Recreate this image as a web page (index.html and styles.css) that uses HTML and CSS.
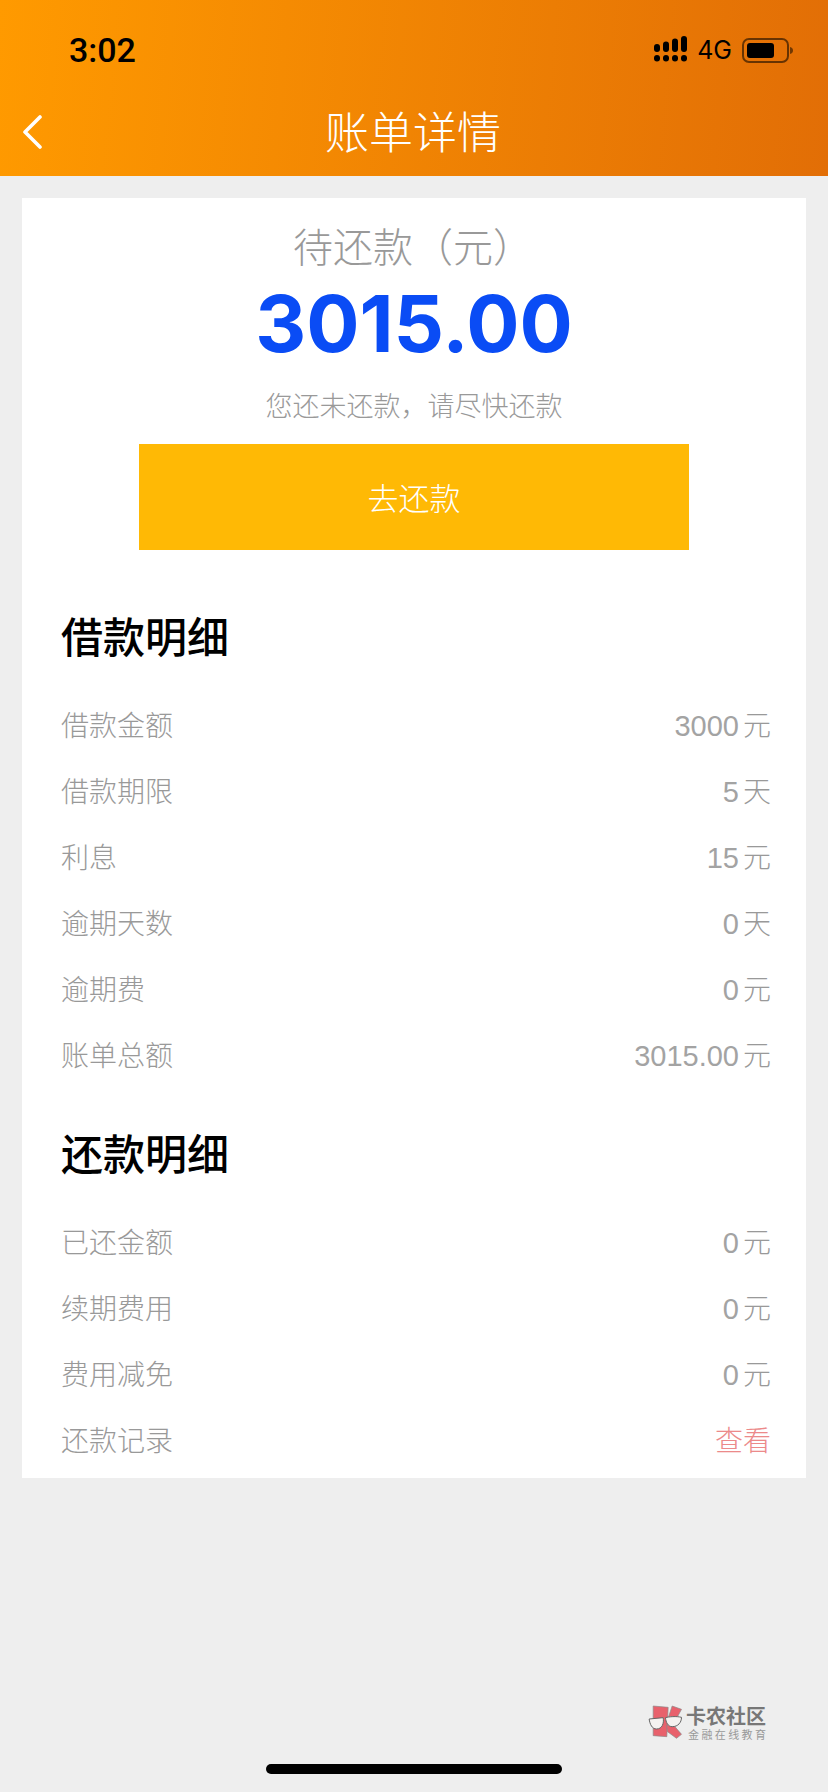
FILE: index.html
```html
<!DOCTYPE html>
<html lang="zh-CN">
<head>
    <meta charset="UTF-8">
    <meta name="viewport" content="width=device-width, initial-scale=1.0">
    <title>账单详情</title>
    <link rel="stylesheet" href="styles.css">
</head>
<body>
    <header class="header">
        <div class="status-bar">
            <span class="time">3:02</span>
            <div class="status-icons">
                <svg class="signal" width="33" height="26" viewBox="0 0 33 26">
                    <g fill="#000">
                        <rect x="0" y="8" width="6" height="8" rx="3"/>
                        <rect x="9" y="5.500" width="6" height="10.500" rx="3"/>
                        <rect x="18" y="2.500" width="6" height="13.500" rx="3"/>
                        <rect x="27" y="0" width="6" height="16" rx="3"/>
                        <rect x="0" y="19" width="6" height="6.500" rx="3"/>
                        <rect x="9" y="19" width="6" height="6.500" rx="3"/>
                        <rect x="18" y="19" width="6" height="6.500" rx="3"/>
                        <rect x="27" y="19" width="6" height="6.500" rx="3"/>
                    </g>
                </svg>
                <span class="network">4G</span>
                <svg class="battery" width="52" height="25" viewBox="0 0 52 25">
                    <rect x="1" y="1" width="45" height="23" rx="6" fill="none" stroke="#000" stroke-opacity=".55" stroke-width="2"/>
                    <rect x="5" y="5" width="27" height="15" rx="3" fill="#000"/>
                    <path d="M48 9c2 .6 3 1.800 3 3.500s-1 2.900-3 3.500z" fill="#000" fill-opacity=".5"/>
                </svg>
            </div>
        </div>
        <nav class="nav-bar">
            <svg class="back" width="20" height="36" viewBox="0 0 20 36">
                <path d="M18 3 3 18 18 33" fill="none" stroke="#fff" stroke-width="3.600" stroke-linecap="round" stroke-linejoin="round"/>
            </svg>
            <h1 class="nav-title">账单详情</h1>
        </nav>
    </header>

    <main class="card">
        <section class="summary">
            <div class="summary-label">待还款（元）</div>
            <div class="amount">3015.00</div>
            <div class="hint">您还未还款，请尽快还款</div>
            <a href="#" class="btn">去还款</a>
        </section>

        <section class="detail">
            <h2>借款明细</h2>
            <div class="row"><span>借款金额</span><span><span class="num">3000</span>元</span></div>
            <div class="row"><span>借款期限</span><span><span class="num">5</span>天</span></div>
            <div class="row"><span>利息</span><span><span class="num">15</span>元</span></div>
            <div class="row"><span>逾期天数</span><span><span class="num">0</span>天</span></div>
            <div class="row"><span>逾期费</span><span><span class="num">0</span>元</span></div>
            <div class="row"><span>账单总额</span><span><span class="num">3015.00</span>元</span></div>
        </section>

        <section class="detail">
            <h2>还款明细</h2>
            <div class="row"><span>已还金额</span><span><span class="num">0</span>元</span></div>
            <div class="row"><span>续期费用</span><span><span class="num">0</span>元</span></div>
            <div class="row"><span>费用减免</span><span><span class="num">0</span>元</span></div>
            <div class="row"><span>还款记录</span><a href="#" class="link">查看</a></div>
        </section>
    </main>

    <!-- 水印 -->
    <div class="watermark">
        <svg width="37" height="35" viewBox="0 0 110 105">
            <g fill="#e8616c" stroke="#8a8a8a" stroke-width="2">
                <path d="M15 3 60 7 56 95 15 92z"/>
                <path d="M72 3 100 13 80 50 58 45z"/>
                <path d="M55 60 76 60 100 88 85 100 58 80z"/>
            </g>
            <g fill="#f5f2f0" stroke="#666" stroke-width="3">
                <path d="M3 42 45 38C48 55 42 72 25 72 12 72 5 58 3 42z"/>
                <path d="M52 38C62 35 85 33 100 37 100 52 90 65 72 65 60 65 53 52 52 38z"/>
            </g>
        </svg>
        <div class="watermark-text">
            <div class="watermark-name">卡农社区</div>
            <div class="watermark-sub">金融在线教育</div>
        </div>
    </div>

    <div class="home-indicator"></div>
</body>
</html>
```

FILE: styles.css
```css
body {
    font-family: "Noto Sans CJK SC", "Noto Sans", sans-serif;
    margin: 0;
    padding: 0;
    height: 1792px;
    background: #eeeeee;
    color: #999;
    position: relative;
    overflow: hidden;
}
.header {
    height: 176px;
    background: linear-gradient(95deg, #ff9a00, #e26e06);
}
.status-bar {
    height: 100px;
    display: flex;
    justify-content: space-between;
    align-items: center;
    padding: 0 34px 0 69px;
    color: #000;
}
.time {
    font-family: "Roboto", "Liberation Sans", sans-serif;
    font-size: 34px;
    font-weight: 500;
}
.status-icons {
    display: flex;
    align-items: center;
    gap: 10px;
}
.signal {
    margin-bottom: 2px;
}
.network {
    font-family: "Inter", "Liberation Sans", sans-serif;
    font-size: 25px;
}
.nav-bar {
    height: 60px;
    position: relative;
    display: flex;
    justify-content: center;
    align-items: center;
}
.back {
    position: absolute;
    left: 22px;
    top: 14px;
}
.nav-title {
    margin: 0 2px 0 0;
    font-size: 44px;
    font-weight: 300;
    color: #fff;
}
.card {
    margin: 22px 22px 0;
    height: 1280px;
    background: #fff;
}
.summary {
    display: flex;
    flex-direction: column;
    align-items: center;
    text-align: center;
    padding-top: 24px;
}
.summary-label {
    height: 46px;
    line-height: 46px;
    font-size: 40px;
    font-weight: 300;
    color: #999;
    margin-right: 2px;
}
.amount {
    height: 110px;
    line-height: 110px;
    font-family: "Inter", "Liberation Sans", sans-serif;
    font-size: 79px;
    font-weight: 700;
    color: #0a4cf5;
}
.hint {
    margin-top: 7px;
    height: 40px;
    line-height: 40px;
    font-size: 27px;
    font-weight: 300;
}
.btn {
    display: block;
    width: 550px;
    height: 106px;
    line-height: 106px;
    margin-top: 19px;
    background: #ffb905;
    color: #fff;
    font-size: 31px;
    font-weight: 300;
    text-decoration: none;
}
.detail {
    padding: 0 35px 0 39px;
}
.detail h2 {
    margin: 0;
    height: 60px;
    line-height: 60px;
    padding-top: 55px;
    font-size: 42px;
    font-weight: 500;
    color: #000;
}
.detail + .detail h2 {
    padding-top: 35px;
}
.row {
    display: flex;
    justify-content: space-between;
    align-items: center;
    height: 66px;
    font-size: 28px;
    font-weight: 300;
}
.row:first-of-type {
    margin-top: 26px;
}
.num {
    font-family: "Liberation Sans", sans-serif;
    font-size: 29px;
    font-weight: 400;
    margin-right: 4px;
    color: #a3a3a3;
}
.link {
    color: #ec8a8a;
    text-decoration: none;
}
.watermark {
    position: absolute;
    left: 648px;
    top: 1705px;
    display: flex;
    align-items: flex-start;
    gap: 1px;
}
.watermark-text {
    display: flex;
    flex-direction: column;
    gap: 3px;
    padding-top: 1px;
}
.watermark-name {
    font-size: 20px;
    line-height: 20px;
    font-weight: 700;
    color: #777;
}
.watermark-sub {
    font-size: 11px;
    line-height: 11px;
    letter-spacing: 2.400px;
    padding-left: 2px;
    color: #999;
}
.home-indicator {
    position: absolute;
    left: 266px;
    top: 1764px;
    width: 296px;
    height: 10px;
    border-radius: 5px;
    background: #000;
}
```
